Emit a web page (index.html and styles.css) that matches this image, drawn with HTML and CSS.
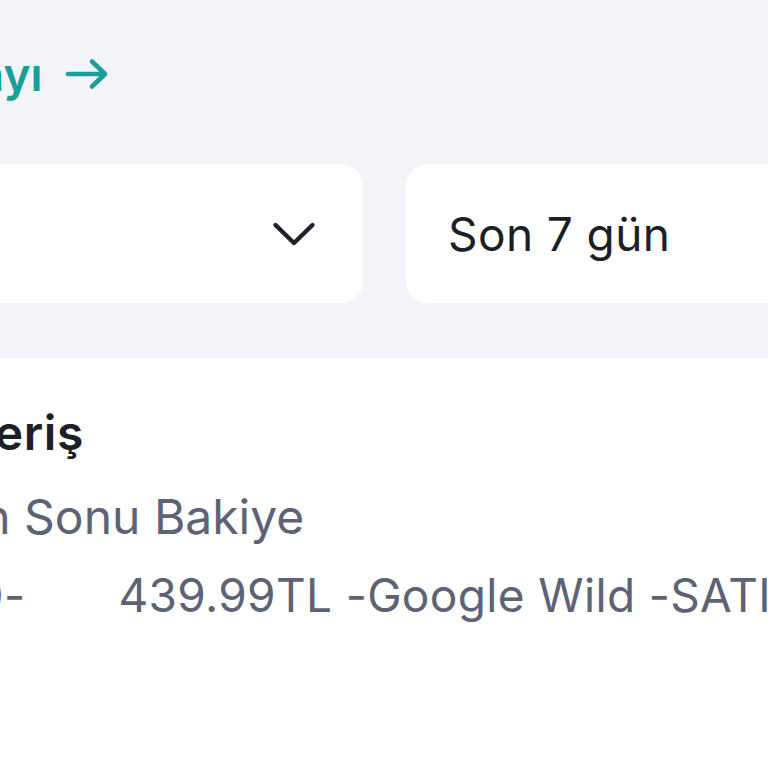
FILE: index.html
```html
<!DOCTYPE html>
<html lang="tr">
<head>
<meta charset="utf-8">
<link rel="stylesheet" href="styles.css">
</head>
<body>
<div class="screen">
  <section class="top">
    <a class="link"><span class="link-text">Hesap detayı</span>
      <svg class="arrow" width="44" height="32" viewBox="0 0 44 32"><path d="M3 16H40M27 3.5L40 16L27 28.5" fill="none" stroke="#1b9e99" stroke-width="4.6" stroke-linecap="round" stroke-linejoin="round"/></svg>
    </a>
    <div class="filters">
      <div class="select select-account">
        <svg class="chevron" width="44" height="28" viewBox="0 0 44 28"><path d="M3.5 5L22 23L40.5 5" fill="none" stroke="#1e2029" stroke-width="4.4" stroke-linecap="round" stroke-linejoin="round"/></svg>
      </div>
      <div class="select select-period">
        <span class="select-text">Son 7 gün</span>
      </div>
    </div>
  </section>
  <section class="list">
    <div class="item">
      <div class="title">Alışveriş</div>
      <div class="sub">Gün Sonu Bakiye</div>
      <div class="desc">1120-       439.99TL -Google Wild -SATIŞ</div>
    </div>
  </section>
</div>
</body>
</html>
```
FILE: styles.css
```css
html, body {
  margin: 0;
  padding: 0;
  background: #ffffff;
  overflow: hidden;
}
.screen {
  width: 768px;
  height: 768px;
  overflow: hidden;
  font-family: "Inter", "Noto Sans", sans-serif;
}
.top {
  background: #f3f4f8;
  height: 358px;
  box-sizing: border-box;
  padding-top: 44px;
}
.link {
  display: flex;
  align-items: center;
  margin-left: -248px;
  color: #1b9e99;
  font-weight: 600;
  font-size: 46px;
  line-height: 60px;
  height: 60px;
}
.link-text {
  white-space: nowrap;
}
.arrow {
  margin-left: 22px;
  flex: none;
}
.filters {
  display: flex;
  gap: 43px;
  margin-top: 60px;
  margin-left: -60px;
}
.select {
  background: #ffffff;
  border-radius: 22px;
  height: 139px;
  box-sizing: border-box;
  display: flex;
  align-items: center;
  flex: none;
}
.select-account {
  width: 423px;
  padding: 0 47px 0 40px;
  justify-content: flex-end;
}
.select-period {
  width: 423px;
  padding-left: 42px;
}
.select-text {
  font-size: 46px;
  letter-spacing: 0.4px;
  color: #1d1f27;
  white-space: nowrap;
}
.chevron {
  flex: none;
}
.list {
  padding-top: 46px;
}
.item {
  margin-left: -122px;
  display: flex;
  flex-direction: column;
  white-space: nowrap;
}
.title {
  font-size: 48px;
  font-weight: 600;
  letter-spacing: 0.6px;
  color: #1d1f27;
  line-height: 58px;
}
.sub {
  font-size: 48px;
  letter-spacing: 0;
  color: #5d6275;
  line-height: 58px;
  margin-top: 26px;
  padding-left: 40px;
}
.desc {
  font-size: 46px;
  letter-spacing: 0.35px;
  color: #5d6275;
  line-height: 58px;
  margin-top: 20px;
  padding-left: 30px;
  white-space: pre;
}
```
